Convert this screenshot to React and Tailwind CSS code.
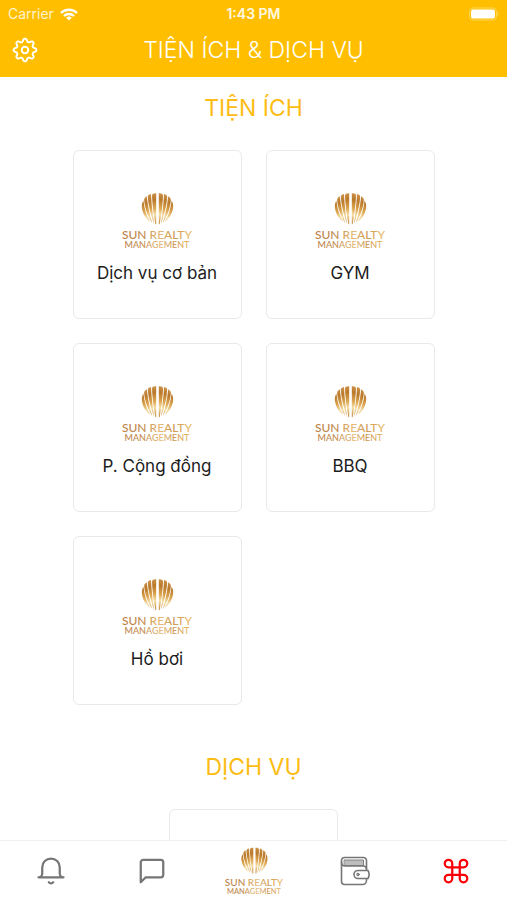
import { useId } from "react";

const amenities = ["Dịch vụ cơ bản", "GYM", "P. Cộng đồng", "BBQ", "Hồ bơi"];

const ribs = [
  "M35.2 2.2C32.8 2 31 2.8 31 4.4C31.4 14 32.6 24 34.4 33.2L35.2 33Z",
  "M30 3C27.8 3.4 26.6 4.6 26.8 6C27.4 15 30 25 33 32.8C31.8 23 30.4 13 30 3Z",
  "M25.8 5.2C23.8 6.4 22.8 8 23.2 9.6C24 18 27 26 31.2 32C28.8 24 26.6 14 25.8 5.2Z",
  "M22.4 9.6C20.8 12.400 20.600 15 21 17.600C22 23.400 25 28 29 30.400C25.600 25 23.200 17.600 22.400 9.600Z",
];

function Logo({ className }) {
  const id = useId();
  const shell = `${id}-shell`;
  const word = `${id}-word`;
  return (
    <svg viewBox="0 0 72 60" className={className} role="img" aria-label="Sun Realty Management">
      <defs>
        <linearGradient id={shell} x1="22" y1="2" x2="33" y2="33" gradientUnits="userSpaceOnUse">
          <stop offset="0" stopColor="#d9a55e" />
          <stop offset="0.3" stopColor="#b9782a" />
          <stop offset="0.55" stopColor="#dca550" />
          <stop offset="0.75" stopColor="#f6dfa8" />
          <stop offset="1" stopColor="#c48a3c" />
        </linearGradient>
        <linearGradient id={word} x1="0" y1="0" x2="72" y2="0" gradientUnits="userSpaceOnUse">
          <stop offset="0" stopColor="#bd8048" />
          <stop offset="0.3" stopColor="#c08a4c" />
          <stop offset="0.55" stopColor="#e6bb78" />
          <stop offset="0.72" stopColor="#cc9650" />
          <stop offset="1" stopColor="#ecc272" />
        </linearGradient>
      </defs>
      {["", "translate(73 0) scale(-1 1)"].map((transform) => (
        <g key={transform} transform={transform} fill={`url(#${shell})`}>
          {ribs.map((d) => (
            <path key={d} d={d} />
          ))}
        </g>
      ))}
      <g fill={`url(#${word})`} textAnchor="middle" className="font-['Lato',sans-serif] font-medium">
        <text x="36" y="48" fontSize="12">SUN REALTY</text>
        <text x="36" y="57" fontSize="9">MANAGEMENT</text>
      </g>
    </svg>
  );
}

const gearPath =
  Array.from({ length: 96 }, (_, i) => {
    const angle = (i / 96) * 2 * Math.PI;
    const wave = Math.cos(8 * angle);
    const radius = 9.9 + 1.5 * Math.sign(wave) * Math.pow(Math.abs(wave), 0.6);
    const x = (13 + radius * Math.sin(angle)).toFixed(2);
    const y = (13 - radius * Math.cos(angle)).toFixed(2);
    return `${i ? "L" : "M"}${x} ${y}`;
  }).join("") + "Z";

function GearIcon() {
  return (
    <svg viewBox="0 0 26 26" className="size-[26px]" fill="none" stroke="currentColor" strokeWidth="1.9" strokeLinejoin="round">
      <path d={gearPath} />
      <circle cx="13" cy="13" r="3.3" />
    </svg>
  );
}

function LineIcon({ children }) {
  return (
    <svg viewBox="0 0 24 24" className="size-[30px]" fill="none" stroke="currentColor" strokeWidth="1.8" strokeLinecap="round" strokeLinejoin="round">
      {children}
    </svg>
  );
}

function WalletIcon() {
  return (
    <svg viewBox="0 0 30 30" className="size-[30px]" fill="none" stroke="currentColor" strokeWidth="1.6" strokeLinejoin="round" strokeLinecap="round">
      <rect x="4.5" y="4" width="19" height="5.500" fill="#bdbdbd" strokeWidth="0.9" />
      <path d="M26.500 14V4.500A3 3 0 0 0 23.500 1.500H4.500A3 3 0 0 0 1.500 4.500V25.500A3 3 0 0 0 4.500 28.500H22.500A4 4 0 0 0 26.500 24.500V22.500" />
      <path d="M1.500 6C1.500 8.500 2.500 10 5 10H23.500A3 3 0 0 1 26.500 13" />
      <path d="M28 14.500H18A4 4 0 0 0 18 22.500H28C29.400 20 29.400 17 28 14.500Z" fill="#fff" />
      <circle cx="18" cy="18.500" r="1.300" fill="#a0a0a0" strokeWidth="1" />
    </svg>
  );
}

function CardFrame({ label, children }) {
  return (
    <button aria-label={label} className="flex h-[169px] w-[169px] flex-col items-center rounded-md border border-[#e9e9e9] bg-white pt-10">
      {children}
    </button>
  );
}

function Card({ label }) {
  return (
    <CardFrame label={label}>
      <Logo className="h-[60px] w-[72px]" />
      <span className="mt-2.5 text-[17px] leading-6 text-[#1c1c1c]">{label}</span>
    </CardFrame>
  );
}

function SectionTitle({ children }) {
  return <h2 className="pt-px text-center text-[23px] leading-8 text-[#fdbc14]">{children}</h2>;
}

function Tab({ label, active, children }) {
  return (
    <button aria-label={label} className={`flex flex-1 items-center justify-center ${active ? "text-[#fb0007]" : "text-[#767676]"}`}>
      {children}
    </button>
  );
}

export default function App() {
  return (
    <div className="flex h-screen flex-col overflow-hidden bg-white font-['Inter','Liberation_Sans',sans-serif]">
      <header className="bg-[#ffbf00] pb-3 text-white">
        <div className="grid h-7 grid-cols-3 items-center px-2 text-[14px] leading-4">
          <div className="flex items-center gap-1.5 text-[#fff3cc]">
            <span>Carrier</span>
            <svg viewBox="0 0 18 13" className="h-[13px] w-[18px]" fill="none" stroke="#fff" strokeWidth="2.300" aria-label="Wi-Fi">
              <path d="M1 5A11.500 11.500 0 0 1 17 5M4 8A7.200 7.200 0 0 1 14 8" />
              <path d="M9 12.500L6.200 9.800A4 4 0 0 1 11.800 9.800Z" fill="#fff" stroke="none" />
            </svg>
          </div>
          <span className="text-center font-semibold text-[#fff8e0]">1:43 PM</span>
          <svg viewBox="0 0 32 14" className="h-[14px] w-8 justify-self-end" aria-label="Battery">
            <rect x="2.500" y="1" width="27" height="12" rx="3.500" fill="none" stroke="#ffd558" />
            <rect x="4" y="2.500" width="24" height="9" rx="2" fill="#fff" />
            <path d="M30.500 5V9A2.200 2.200 0 0 0 30.500 5" fill="#ffd558" />
          </svg>
        </div>
        <div className="flex h-[37px] items-center px-3 pt-1.5">
          <button aria-label="Cài đặt" className="w-[26px]">
            <GearIcon />
          </button>
          <h1 className="flex-1 text-center text-[23px] leading-8 font-light">TIỆN ÍCH &amp; DỊCH VỤ</h1>
          <span className="w-[26px]" />
        </div>
      </header>

      <main className="min-h-0 flex-1 overflow-hidden pt-3.5">
        <section>
          <SectionTitle>TIỆN ÍCH</SectionTitle>
          <div className="mx-auto mt-[26px] grid w-fit grid-cols-2 gap-6">
            {amenities.map((label) => (
              <Card key={label} label={label} />
            ))}
          </div>
        </section>
        <section className="mt-[45px]">
          <SectionTitle>DỊCH VỤ</SectionTitle>
          <div className="mt-[26px] flex justify-center">
            <CardFrame label="Dịch vụ" />
          </div>
        </section>
      </main>

      <nav className="flex h-[60px] shrink-0 border-t border-[#efefef] bg-white">
        <Tab label="Thông báo">
          <LineIcon>
            <path d="M22 17H2a3 3 0 0 0 3-3V9a7 7 0 0 1 14 0v5a3 3 0 0 0 3 3zM13.730 21a2 2 0 0 1-3.460 0" />
          </LineIcon>
        </Tab>
        <Tab label="Tin nhắn">
          <LineIcon>
            <path d="M21 15a2 2 0 0 1-2 2H7l-4 4V5a2 2 0 0 1 2-2h14a2 2 0 0 1 2 2z" />
          </LineIcon>
        </Tab>
        <Tab label="Trang chủ">
          <Logo className="h-[50px] w-[60px]" />
        </Tab>
        <Tab label="Ví">
          <WalletIcon />
        </Tab>
        <Tab label="Tiện ích" active>
          <LineIcon>
            <path d="M18 3a3 3 0 0 0-3 3v12a3 3 0 1 0 3-3H6a3 3 0 1 0 3 3V6a3 3 0 1 0-3 3h12a3 3 0 1 0 0-6z" />
          </LineIcon>
        </Tab>
      </nav>
    </div>
  );
}
